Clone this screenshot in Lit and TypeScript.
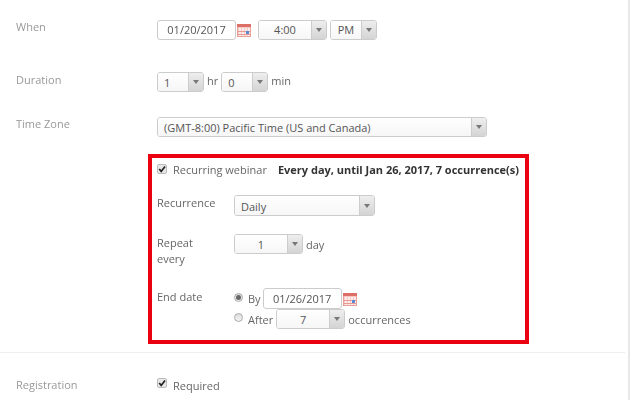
import { LitElement, html, css, svg } from "lit";
import { customElement } from "lit/decorators.js";

const cal = html`<svg class="cal" width="14" height="13" viewBox="0 0 14 13">
  <rect x="0.5" y="0.5" width="13" height="12" fill="#f6c9c4" stroke="#e8a098"/>
  <rect x="0" y="0" width="14" height="3" fill="#dc7068"/>
  ${[2, 5, 8, 11].map((x) => svg`<rect x="${x}" y="4" width="2" height="8" fill="#fdeeee"/>`)}
  <rect x="1" y="7" width="12" height="1" fill="#e79a93"/>
  <rect x="1" y="10" width="12" height="1" fill="#e79a93"/>
  <rect x="9" y="7" width="3" height="3" fill="#5a8ad6"/>
</svg>`;

const check = html`<span class="check"><svg width="10" height="10" viewBox="0 0 10 10"><path d="M2.2 5 L4.2 7.4 L8 2.4" fill="none" stroke="#222" stroke-width="1.7"/></svg></span>`;

@customElement("app-root")
export class AppRoot extends LitElement {
  static styles = css`
    :host { display: block; width: 640px; height: 400px; overflow: hidden; background: #fff;
      font-family: "Open Sans", sans-serif; font-size: 11px; color: #666; white-space: nowrap; }
    .page { box-sizing: border-box; width: 630px; height: 400px; border-right: 2px solid #e8e8e8; padding-right: 3px; filter: blur(0.3px); }
    .row { display: flex; padding-left: 16px; }
    .label { width: 141px; flex: none; color: #999; line-height: 16px; }
    .fields { display: flex; align-items: flex-start; }
    .when { padding-top: 20px; height: 52px; }
    .when .label { margin-top: -1px; }
    .when .input, .when .val { padding-bottom: 1px; }
    .duration { height: 45px; }
    .zone { height: 37px; }
    .zone .label { margin-top: -1px; }
    .box { box-sizing: border-box; width: 381px; height: 190px; margin-left: 148px;
      border: 4px solid #ea0010; padding: 5px; }
    .head { display: flex; align-items: center; height: 16px; margin-top: -2px; }
    .head b { margin-left: 11px; color: #333; font-weight: 700; }
    .inner { display: flex; }
    .inner .label2 { width: 77px; flex: none; line-height: 16px; }
    .rec { margin-top: 18px; height: 39px; }
    .rec .val { padding-top: 1px; }
    .rep { height: 54px; }
    .rep .label2, .end .label2 { padding-top: 1px; }
    .rep .fields { height: 20px; align-items: center; }
    .stack { display: flex; flex-direction: column; }
    .line { display: flex; align-items: center; }
    .input, .select { box-sizing: border-box; height: 21px; border: 1px solid #ccc; border-radius: 3px;
      background: #fff; color: #555; display: flex; align-items: center; flex: none; }
    .input { width: 79px; justify-content: center; }
    .select { overflow: hidden; }
    .select .val { flex: 1; padding-left: 6px; background: linear-gradient(#fff, #f6f6f6); align-self: stretch; display: flex; align-items: center; }
    .select .val.c { justify-content: center; padding-left: 0; }
    .select .arrow { width: 14px; align-self: stretch; flex: none; border-left: 1px solid #ccc;
      background: linear-gradient(#eee, #d4d4d4); display: flex; align-items: center; justify-content: center; }
    .select .arrow::after { content: ""; border: 3px solid transparent; border-top: 4px solid #777; border-bottom: 0; }
    .cal { flex: none; margin-left: 1px; margin-top: 4px; }
    .line .cal { margin-top: 2px; }
    .check { box-sizing: border-box; width: 10px; height: 10px; border: 1px solid #bbb; border-radius: 2px; background: #e8e8e8; flex: none; display: flex; margin-right: 6px; }
    .check svg { flex: none; margin: -1px; }
    .radio { box-sizing: border-box; width: 9px; height: 9px; border: 1px solid #aaa; border-radius: 50%; background: linear-gradient(#ddd, #f4f4f4); flex: none; margin-right: 5px; margin-top: -3px; display: flex; align-items: center; justify-content: center; }
    .radio.on::after { content: ""; width: 5px; height: 5px; border-radius: 50%; background: #666; }
    .w69 { width: 69px; } .w47 { width: 47px; } .w330 { width: 330px; } .w141 { width: 141px; }
    .ml3 { margin-left: 3px; } .ml2 { margin-left: 2px; }
    .tx3 { margin: 0 3px; line-height: 18px; }
    .gap { margin-left: 7px; } .gap3 { margin-left: 3px; }
    .divider { height: 1px; background: #eee; margin-top: 8px; }
    .reg { margin-top: 24px; align-items: center; height: 16px; }
    .by { height: 21px; }
    .after { height: 20px; }
    .after .select { height: 20px; }
    .t20 { height: 20px; }
  `;

  private sel(v: string, cls: string, center = false) {
    return html`<div class="select ${cls}"><span class="val ${center ? "c" : ""}">${v}</span><span class="arrow"></span></div>`;
  }

  render() {
    return html`
      <div class="page">
        <div class="row when">
          <div class="label">When</div>
          <div class="fields">
            <div class="input t20">01/20/2017</div>${cal}
            ${this.sel("4:00", "w69 t20 gap", true)}
            ${this.sel("PM", "w47 t20 gap3", true)}
          </div>
        </div>
        <div class="row duration">
          <div class="label">Duration</div>
          <div class="fields">
            ${this.sel("1", "w47 t20")}<span class="tx3">hr</span>${this.sel("0", "w47 t20")}<span class="tx3">min</span>
          </div>
        </div>
        <div class="row zone">
          <div class="label">Time Zone</div>
          <div class="fields">${this.sel("(GMT-8:00) Pacific Time (US and Canada)", "w330 t20")}</div>
        </div>
        <div class="box">
          <div class="head">${check}<span>Recurring webinar</span><b>Every day, until Jan 26, 2017, 7 occurrence(s)</b></div>
          <div class="inner rec"><div class="label2">Recurrence</div><div>${this.sel("Daily", "w141")}</div></div>
          <div class="inner rep"><div class="label2">Repeat<br />every</div>
            <div class="fields">${this.sel("1", "w69 t20", true)}<span class="ml3">day</span></div></div>
          <div class="inner end"><div class="label2">End date</div>
            <div class="stack">
              <div class="line by"><span class="radio on"></span><span>By</span><div class="input ml2">01/26/2017</div>${cal}</div>
              <div class="line after"><span class="radio"></span><span>After</span>${this.sel("7", "w69 ml3", true)}<span class="ml3">occurrences</span></div>
            </div>
          </div>
        </div>
        <div class="divider"></div>
        <div class="row reg">
          <div class="label">Registration</div>
          <div class="fields">${check}<span>Required</span></div>
        </div>
      </div>
    `;
  }
}
